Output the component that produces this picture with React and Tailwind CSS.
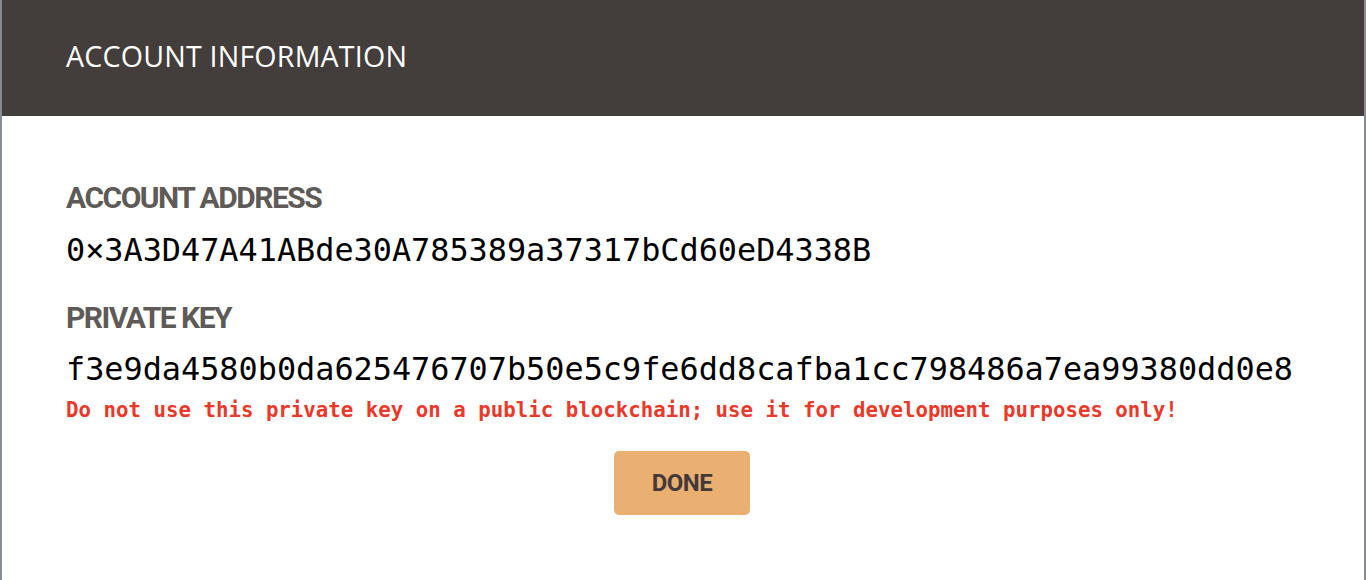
import React from "react";

const mono = { fontFamily: '"DejaVu Sans Mono", "Liberation Mono", monospace' };

export default function App() {
  return (
    <div className="h-[580px] w-full bg-[#868c94] px-[2px] overflow-hidden">
      <div className="h-full bg-white">
        {/* Header */}
        <div className="h-[116px] bg-[#433e3b] flex items-center px-[64px] pb-[4px]">
          <h1
            className="text-white text-[28.6px] tracking-[0.2px]"
            style={{ fontFamily: '"Open Sans", "Noto Sans", sans-serif' }}
          >
            ACCOUNT INFORMATION
          </h1>
        </div>

        {/* Body */}
        <div className="px-[64px] pt-[64px]">
          <Label>ACCOUNT ADDRESS</Label>
          <p className="text-[31.85px] leading-[40px] mt-[14px] text-black" style={mono}>
            0×3A3D47A41ABde30A785389a37317bCd60eD4338B
          </p>

          <div className="mt-[30px]">
            <Label>PRIVATE KEY</Label>
          </div>
          <p className="text-[31.85px] leading-[40px] mt-[13px] text-black" style={mono}>
            f3e9da4580b0da625476707b50e5c9fe6dd8cafba1cc798486a7ea99380dd0e8
          </p>
          <p className="text-[20.75px] leading-[26px] font-bold text-[#e8392a] mt-[8px]" style={mono}>
            Do not use this private key on a public blockchain; use it for development purposes only!
          </p>

          <div className="flex justify-center mt-[28px] pr-[2px]">
            <button
              className="w-[136px] h-[64px] rounded-[5px] bg-[#e9b072] text-[#45383a] text-[24px] font-bold tracking-[-0.5px]"
              style={{ fontFamily: 'Roboto, "Liberation Sans", sans-serif' }}
            >
              DONE
            </button>
          </div>
        </div>
      </div>
    </div>
  );
}

function Label({ children }) {
  return (
    <h2
      className="text-[30px] leading-[36px] font-bold text-[#5e5a57] tracking-[-1.5px]"
      style={{ fontFamily: 'Roboto, "Liberation Sans", sans-serif' }}
    >
      {children}
    </h2>
  );
}
